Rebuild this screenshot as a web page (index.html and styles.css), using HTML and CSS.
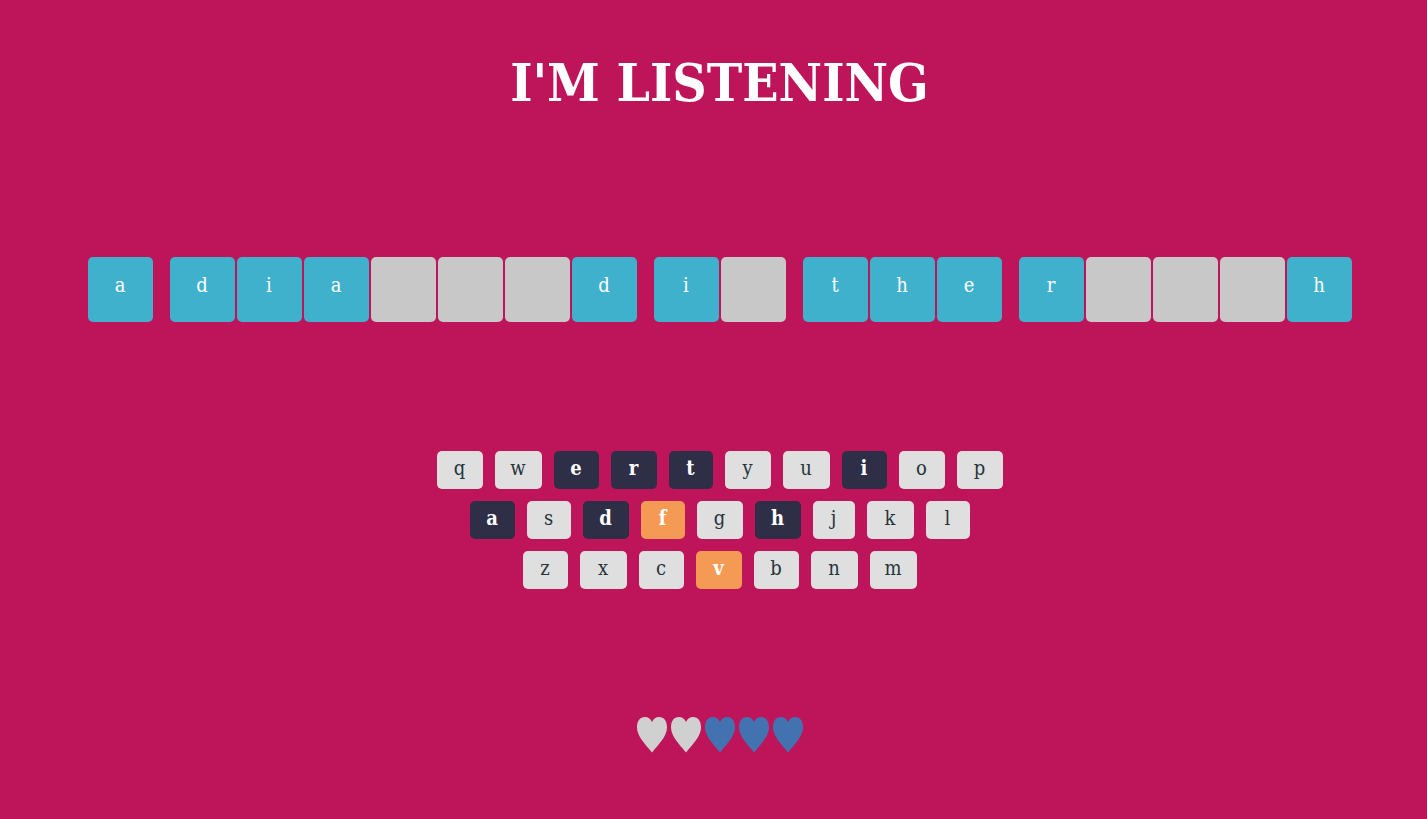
FILE: index.html
```html
<!DOCTYPE html>
<html lang="en">
<head>
<meta charset="utf-8">
<title>I'm Listening</title>
<link rel="stylesheet" href="styles.css">
</head>
<body>
<main class="game">
  <h1 class="title">I'M LISTENING</h1>
  <ul class="phrase">
    <li class="word"><span class="tile shown">a</span></li>
    <li class="word"><span class="tile shown">d</span><span class="tile shown">i</span><span class="tile shown">a</span><span class="tile"></span><span class="tile"></span><span class="tile"></span><span class="tile shown">d</span></li>
    <li class="word"><span class="tile shown">i</span><span class="tile"></span></li>
    <li class="word"><span class="tile shown">t</span><span class="tile shown">h</span><span class="tile shown">e</span></li>
    <li class="word"><span class="tile shown">r</span><span class="tile"></span><span class="tile"></span><span class="tile"></span><span class="tile shown">h</span></li>
  </ul>
  <div class="keyboard">
    <div class="row">
      <button class="key">q</button><button class="key wide">w</button><button class="key narrow chosen">e</button><button class="key chosen">r</button><button class="key slim chosen">t</button><button class="key">y</button><button class="key wide">u</button><button class="key narrow chosen">i</button><button class="key">o</button><button class="key">p</button>
    </div>
    <div class="row">
      <button class="key narrow chosen">a</button><button class="key slim">s</button><button class="key chosen">d</button><button class="key slim wrong">f</button><button class="key">g</button><button class="key chosen">h</button><button class="key thin">j</button><button class="key wide">k</button><button class="key slim">l</button>
    </div>
    <div class="row">
      <button class="key narrow">z</button><button class="key wide">x</button><button class="key narrow">c</button><button class="key wrong">v</button><button class="key narrow">b</button><button class="key wide">n</button><button class="key wide">m</button>
    </div>
  </div>
  <div class="lives">
    <svg class="heart lost" viewBox="0 0 30 36"><path d="M15 5C13.500 1.500 11 0 8 0C3 0 0 4 0 10.500C0 19 8 27 15 35.500C22 27 30 19 30 10.500C30 4 27 0 22 0C19 0 16.500 1.500 15 5Z"/></svg>
    <svg class="heart lost" viewBox="0 0 30 36"><path d="M15 5C13.500 1.500 11 0 8 0C3 0 0 4 0 10.500C0 19 8 27 15 35.500C22 27 30 19 30 10.500C30 4 27 0 22 0C19 0 16.500 1.500 15 5Z"/></svg>
    <svg class="heart" viewBox="0 0 30 36"><path d="M15 5C13.500 1.500 11 0 8 0C3 0 0 4 0 10.500C0 19 8 27 15 35.500C22 27 30 19 30 10.500C30 4 27 0 22 0C19 0 16.500 1.500 15 5Z"/></svg>
    <svg class="heart" viewBox="0 0 30 36"><path d="M15 5C13.500 1.500 11 0 8 0C3 0 0 4 0 10.500C0 19 8 27 15 35.500C22 27 30 19 30 10.500C30 4 27 0 22 0C19 0 16.500 1.500 15 5Z"/></svg>
    <svg class="heart" viewBox="0 0 30 36"><path d="M15 5C13.500 1.500 11 0 8 0C3 0 0 4 0 10.500C0 19 8 27 15 35.500C22 27 30 19 30 10.500C30 4 27 0 22 0C19 0 16.500 1.500 15 5Z"/></svg>
  </div>
</main>
</body>
</html>
```
FILE: styles.css
```css
* {
  box-sizing: border-box;
}

body {
  margin: 0;
  background: #be145a;
  font-family: "DejaVu Serif Condensed", "DejaVu Serif", serif;
}

.game {
  display: flex;
  flex-direction: column;
  align-items: center;
  padding: 50px 0 48px 12px;
}

.title {
  margin: 0 0 143px;
  color: #fff;
  font-size: 53px;
  line-height: 64px;
  font-weight: 700;
}

.phrase {
  display: flex;
  flex-wrap: wrap;
  justify-content: center;
  gap: 17px;
  margin: 0 0 129px;
  padding: 0;
  list-style: none;
}

.word {
  display: flex;
  gap: 2px;
}

.tile {
  width: 65px;
  height: 65px;
  border-radius: 5px;
  background: #c8c8c8;
  color: #fff;
  font-size: 20px;
  line-height: 56px;
  text-align: center;
}

.shown {
  background: #40b1cd;
}

.keyboard {
  display: flex;
  flex-direction: column;
  gap: 12px;
  margin-bottom: 128px;
}

.row {
  display: flex;
  justify-content: center;
  gap: 12px;
}

.key {
  width: 46px;
  height: 38px;
  padding: 0 0 4px;
  border: 0;
  border-radius: 5px;
  background: #dfdfdf;
  color: #25343b;
  font-family: inherit;
  font-size: 20px;
  line-height: 24px;
}

.wide {
  width: 47px;
}

.narrow {
  width: 45px;
}

.slim {
  width: 44px;
}

.thin {
  width: 42px;
}

.chosen {
  background: #2e2e47;
  color: #fff;
  font-weight: 700;
}

.wrong {
  background: #f59a54;
  color: #fff;
  font-weight: 700;
}

.lives {
  display: flex;
  gap: 4px;
}

.heart {
  width: 30px;
  height: 36px;
  fill: #4272b0;
}

.lost {
  fill: #d0d0d0;
}
```
